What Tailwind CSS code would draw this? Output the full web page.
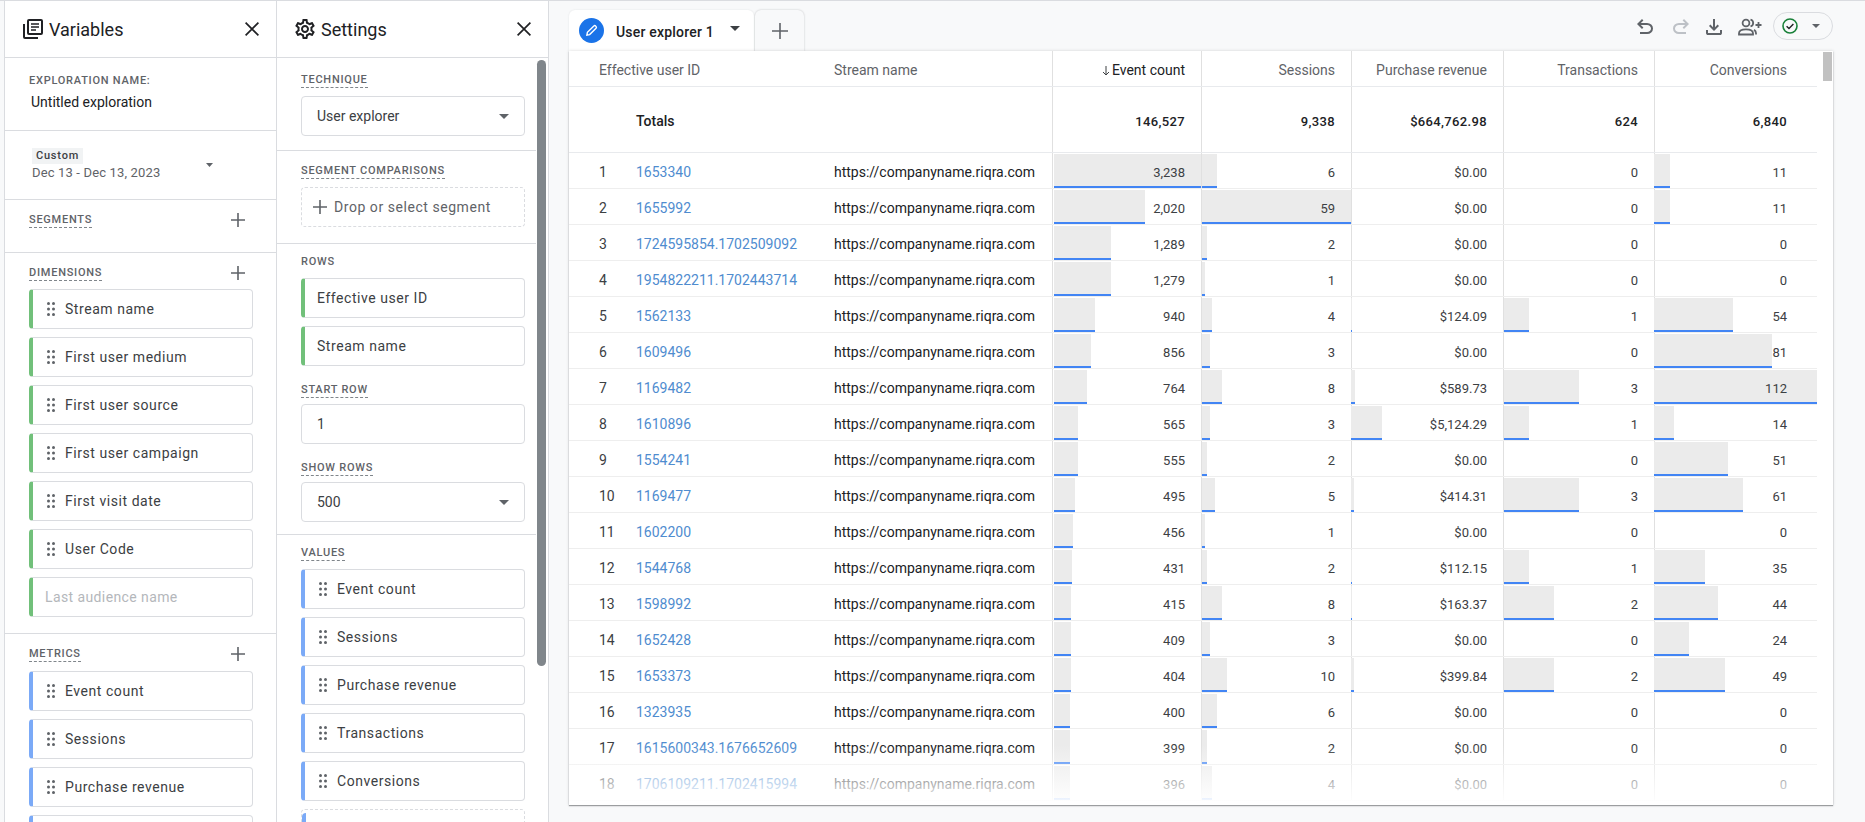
<!DOCTYPE html>
<html lang="en">

<head>
    <meta charset="UTF-8">
    <meta name="viewport" content="width=device-width, initial-scale=1.0">
    <title>User explorer</title>
    <script src="https://cdn.jsdelivr.net/npm/@tailwindcss/browser@4"></script>
</head>

<body class="flex h-[822px] w-[1865px] overflow-hidden border-t border-[#dadce0] bg-[#f8f9fa] pl-[4px] font-['Roboto',sans-serif] text-[#202124]">

    <!-- Variables panel -->
    <aside class="flex h-full w-[273px] shrink-0 flex-col overflow-hidden border-x border-[#dadce0] bg-white">
        <header class="flex h-[57px] shrink-0 items-center justify-between border-b border-[#dadce0] pl-[18px] pr-[17px]">
            <div class="flex items-center gap-[6px]">
                <svg class="h-[20px] w-[20px]" viewBox="0 0 20 20" fill="none" stroke="#202124" stroke-width="2">
                    <path d="M1 5v13a1 1 0 0 0 1 1h13"/>
                    <rect x="5" y="1" width="14" height="14" rx="1"/>
                    <path d="M8 5h8M8 8h8M8 11h5" stroke-width="1.6"/>
                </svg>
                <span class="text-[18px]">Variables</span>
            </div>
            <svg class="h-[14px] w-[14px]" viewBox="0 0 14 14" stroke="#202124" stroke-width="1.7"><path d="M.6.6l12.8 12.8M13.4.6L.6 13.4"/></svg>
        </header>

        <section class="h-[73px] shrink-0 border-b border-[#dadce0] pl-[24px] pt-[15px]">
            <div class="text-[11px] leading-[16px] font-medium tracking-[0.75px] text-[#5f6368]">EXPLORATION NAME:</div>
            <div class="ml-[2px] mt-[3px] text-[14px] leading-[20px]">Untitled exploration</div>
        </section>

        <section class="flex h-[69px] shrink-0 border-b border-[#dadce0] pl-[27px] pt-[17px]">
            <div class="w-[174px]">
                <span class="block w-[51px] bg-[#f1f3f4] text-center text-[11px] leading-[16px] font-medium tracking-[0.8px] text-[#3c4043]">Custom</span>
                <div class="mt-[1px] text-[13px] leading-[16px] tracking-[0.15px] text-[#5f6368]">Dec 13 - Dec 13, 2023</div>
            </div>
            <svg class="mt-[15px] h-[4px] w-[7px]" viewBox="0 0 7 4" fill="#5f6368"><path d="M0 0h7L3.5 4z"/></svg>
        </section>

        <section class="h-[53px] shrink-0 border-b border-[#dadce0] pl-[24px] pr-[31px] pt-[12px]">
            <div class="flex items-center justify-between">
                <span class="border-b border-dashed border-[#80868b] text-[11px] leading-[15px] font-medium tracking-[0.75px] text-[#5f6368]">SEGMENTS</span>
                <svg class="h-[14px] w-[14px]" viewBox="0 0 14 14" stroke="#5f6368" stroke-width="1.6"><path d="M7 0v14M0 7h14"/></svg>
            </div>
        </section>

        <section class="h-[381px] shrink-0 border-b border-[#dadce0] pl-[24px] pr-[23px] pt-[12px]">
            <div class="mb-[8px] flex items-center justify-between pr-[8px]">
                <span class="border-b border-dashed border-[#80868b] text-[11px] leading-[15px] font-medium tracking-[0.75px] text-[#5f6368]">DIMENSIONS</span>
                <svg class="h-[14px] w-[14px]" viewBox="0 0 14 14" stroke="#5f6368" stroke-width="1.6"><path d="M7 0v14M0 7h14"/></svg>
            </div>
            <div id="dimensions" class="flex flex-col gap-[8px]"></div>
        </section>

        <section class="pl-[24px] pr-[23px] pt-[12px]">
            <div class="mb-[9px] flex items-center justify-between pr-[8px]">
                <span class="border-b border-dashed border-[#80868b] text-[11px] leading-[15px] font-medium tracking-[0.75px] text-[#5f6368]">METRICS</span>
                <svg class="h-[14px] w-[14px]" viewBox="0 0 14 14" stroke="#5f6368" stroke-width="1.6"><path d="M7 0v14M0 7h14"/></svg>
            </div>
            <div id="metrics" class="flex flex-col gap-[8px]"></div>
        </section>
    </aside>

    <!-- Settings panel -->
    <aside class="flex h-full w-[272px] shrink-0 flex-col overflow-hidden border-r border-[#dadce0] bg-white">
        <header class="flex h-[57px] shrink-0 items-center justify-between border-b border-[#dadce0] pl-[16px] pr-[17px]">
            <div class="flex items-center gap-[4px]">
                <svg class="h-[24px] w-[24px]" viewBox="0 0 24 24" fill="#202124"><path d="M19.43 12.98c.04-.32.07-.64.07-.98 0-.34-.03-.66-.07-.98l2.11-1.65c.19-.15.24-.42.12-.64l-2-3.46c-.09-.16-.26-.25-.44-.25-.06 0-.12.01-.17.03l-2.49 1c-.52-.4-1.08-.73-1.69-.98l-.38-2.65C14.46 2.18 14.25 2 14 2h-4c-.25 0-.46.18-.49.42l-.38 2.65c-.61.25-1.17.59-1.69.98l-2.49-1c-.06-.02-.12-.03-.18-.03-.17 0-.34.09-.43.25l-2 3.46c-.13.22-.07.49.12.64l2.11 1.65c-.04.32-.07.65-.07.98 0 .33.03.66.07.98l-2.11 1.65c-.19.15-.24.42-.12.64l2 3.46c.09.16.26.25.44.25.06 0 .12-.01.17-.03l2.49-1c.52.4 1.08.73 1.69.98l.38 2.65c.03.24.24.42.49.42h4c.25 0 .46-.18.49-.42l.38-2.65c.61-.25 1.17-.59 1.69-.98l2.49 1c.06.02.12.03.18.03.17 0 .34-.09.43-.25l2-3.46c.12-.22.07-.49-.12-.64l-2.11-1.65zm-1.98-1.71c.04.31.05.52.05.73 0 .21-.02.43-.05.73l-.14 1.13.89.7 1.08.84-.7 1.21-1.27-.51-1.04-.42-.9.68c-.43.32-.84.56-1.25.73l-1.06.43-.16 1.13-.2 1.35h-1.4l-.19-1.35-.16-1.13-1.06-.43c-.43-.18-.83-.41-1.23-.71l-.91-.7-1.06.43-1.27.51-.7-1.21 1.08-.84.89-.7-.14-1.13c-.03-.31-.05-.54-.05-.74s.02-.43.05-.73l.14-1.13-.89-.7-1.08-.84.7-1.21 1.27.51 1.04.42.9-.68c.43-.32.84-.56 1.25-.73l1.06-.43.16-1.13.2-1.35h1.39l.19 1.35.16 1.13 1.06.43c.43.18.83.41 1.23.71l.91.7 1.06-.43 1.27-.51.7 1.21-1.07.85-.89.7.14 1.13zM12 8c-2.21 0-4 1.79-4 4s1.79 4 4 4 4-1.79 4-4-1.79-4-4-4zm0 6c-1.1 0-2-.9-2-2s.9-2 2-2 2 .9 2 2-.9 2-2 2z"/></svg>
                <span class="text-[18px]">Settings</span>
            </div>
            <svg class="h-[14px] w-[14px]" viewBox="0 0 14 14" stroke="#202124" stroke-width="1.7"><path d="M.6.6l12.8 12.8M13.4.6L.6 13.4"/></svg>
        </header>

        <div class="flex min-h-0 flex-1">
            <div class="w-[259px] shrink-0">
                <section class="h-[93px] border-b border-[#dadce0] pl-[24px] pr-[11px] pt-[14px]">
                    <span class="block w-fit border-b border-dashed border-[#80868b] text-[11px] leading-[15px] font-medium tracking-[0.75px] text-[#5f6368]">TECHNIQUE</span>
                    <div class="mt-[8px] flex h-[40px] items-center justify-between rounded-[4px] border border-[#dadce0] pl-[15px] pr-[15px] text-[14px]">
                        <span class="text-[#3c4043]">User explorer</span>
                        <svg class="h-[5px] w-[10px]" viewBox="0 0 10 5" fill="#5f6368"><path d="M0 0h10L5 5z"/></svg>
                    </div>
                </section>

                <section class="h-[93px] border-b border-[#dadce0] pl-[24px] pr-[11px] pt-[12px]">
                    <span class="block w-fit border-b border-dashed border-[#80868b] text-[11px] leading-[15px] font-medium tracking-[0.75px] text-[#5f6368]">SEGMENT COMPARISONS</span>
                    <div class="mt-[8px] flex h-[40px] items-center gap-[7px] rounded-[4px] border border-dashed border-[#dadce0] pl-[11px] text-[14px] tracking-[0.55px] text-[#5f6368]">
                        <svg class="h-[14px] w-[14px]" viewBox="0 0 14 14" stroke="#5f6368" stroke-width="1.6"><path d="M7 0v14M0 7h14"/></svg>
                        <span>Drop or select segment</span>
                    </div>
                </section>

                <section class="h-[291px] border-b border-[#dadce0] pl-[24px] pr-[11px] pt-[10px]">
                    <span class="block w-fit text-[11px] leading-[16px] font-medium tracking-[0.75px] text-[#5f6368]">ROWS</span>
                    <div id="rows" class="mt-[8px] flex flex-col gap-[8px]"></div>
                    <span class="mt-[16px] block w-fit border-b border-dashed border-[#80868b] text-[11px] leading-[15px] font-medium tracking-[0.75px] text-[#5f6368]">START ROW</span>
                    <div class="mt-[6px] flex h-[40px] items-center rounded-[4px] border border-[#dadce0] pl-[15px] text-[14px] text-[#3c4043]">1</div>
                    <span class="mt-[16px] block w-fit border-b border-dashed border-[#80868b] text-[11px] leading-[15px] font-medium tracking-[0.75px] text-[#5f6368]">SHOW ROWS</span>
                    <div class="mt-[6px] flex h-[40px] items-center justify-between rounded-[4px] border border-[#dadce0] px-[15px] text-[14px] text-[#3c4043]">
                        <span>500</span>
                        <svg class="h-[5px] w-[10px]" viewBox="0 0 10 5" fill="#5f6368"><path d="M0 0h10L5 5z"/></svg>
                    </div>
                </section>

                <section class="pl-[24px] pr-[11px] pt-[10px]">
                    <span class="block w-fit border-b border-dashed border-[#80868b] text-[11px] leading-[15px] font-medium tracking-[0.75px] text-[#5f6368]">VALUES</span>
                    <div id="values" class="mt-[8px] flex flex-col gap-[8px]"></div>
                    <div class="mt-[8px] h-[40px] rounded-[4px] border border-dashed border-[#dadce0] pt-[3px]">
                        <div class="h-[30px] w-[4px] rounded-l-[4px] bg-[#7baaf7]"></div>
                    </div>
                </section>
            </div>
            <div class="ml-[1px] mt-[2px] h-[606px] w-[9px] rounded-full bg-[#80868b]"></div>
        </div>
    </aside>

    <!-- Report area -->
    <main class="flex min-w-0 flex-1 flex-col pl-[20px] pr-[32px]">
        <div class="flex h-[50px] shrink-0 justify-between">
            <div class="flex items-end gap-[1px]">
                <div class="flex h-[41px] w-[185px] items-center rounded-t-[6px] bg-white pl-[10px] shadow-[0_0_2px_rgba(60,64,67,.12)]">
                    <span class="flex h-[25px] w-[25px] items-center justify-center rounded-full bg-[#1a73e8]">
                        <svg class="h-[13px] w-[13px]" viewBox="0 0 14 14" fill="none" stroke="#fff" stroke-width="1.5"><path d="M2 12l.6-3L9.5 2.1a1.3 1.3 0 0 1 1.9 0l.5.5a1.3 1.3 0 0 1 0 1.9L5 11.4z"/></svg>
                    </span>
                    <span class="ml-[12px] pt-[4px] text-[14px] font-medium tracking-[0.2px]">User explorer 1</span>
                    <svg class="ml-[16px] mb-[4px] h-[5px] w-[10px]" viewBox="0 0 10 5" fill="#3c4043"><path d="M0 0h10L5 5z"/></svg>
                </div>
                <div class="flex h-[41px] w-[49px] items-center justify-center rounded-t-[6px] bg-[#f8f9fa] shadow-[0_0_2px_rgba(60,64,67,.3)]">
                    <svg class="h-[16px] w-[16px]" viewBox="0 0 16 16" stroke="#5f6368" stroke-width="1.6"><path d="M8 0v16M0 8h16"/></svg>
                </div>
            </div>

            <div class="flex items-start">
                <svg class="mt-[14px] h-[24px] w-[24px]" viewBox="0 0 24 24" fill="#5f6368"><path d="M7 19v-2h7.1q1.575 0 2.738-1T18 13.5Q18 12 16.838 11T14.1 10H7.8l2.6 2.6L9 14 4 9l5-5 1.4 1.4L7.8 8h6.3q2.425 0 4.163 1.575T20 13.5q0 2.35-1.738 3.925T14.1 19H7Z"/></svg>
                <svg class="ml-[12px] mt-[14px] h-[24px] w-[24px]" viewBox="0 0 24 24" fill="#bdc1c6"><path d="M9.9 19q-2.425 0-4.163-1.575T4 13.5q0-2.35 1.738-3.925T9.9 8h6.3l-2.6-2.6L15 4l5 5-5 5-1.4-1.4 2.6-2.6H9.9q-1.575 0-2.738 1T6 13.5Q6 15 7.163 16T9.9 17H17v2H9.9Z"/></svg>
                <svg class="ml-[9px] mt-[14px] h-[24px] w-[24px]" viewBox="0 0 24 24" fill="#5f6368"><path d="M12 16l-5-5 1.4-1.45 2.6 2.6V4h2v8.15l2.6-2.6L17 11l-5 5Zm-6 4q-.825 0-1.413-.587T4 18v-3h2v3h12v-3h2v3q0 .825-.587 1.413T18 20H6Z"/></svg>
                <svg class="ml-[12px] mt-[17px] h-[18px] w-[24px]" viewBox="0 0 24 18" fill="none" stroke="#5f6368" stroke-width="1.8">
                    <circle cx="8" cy="5" r="3.4"/>
                    <path d="M1 16.5v-1.2c0-2.6 3.4-3.9 7-3.9s7 1.3 7 3.9v1.2z"/>
                    <path d="M12.5 1.6a3.5 3.5 0 0 1 0 6.8M16 11.8c1.3.8 2 2 2 3.4v1.3"/>
                    <path d="M20.5 4v6M17.5 7h6"/>
                </svg>
                <div class="ml-[11px] mt-[11px] flex h-[28px] w-[60px] items-center rounded-full border border-[#dadce0] pl-[8px]">
                    <svg class="h-[16px] w-[16px]" viewBox="0 0 16 16" fill="none"><circle cx="8" cy="8" r="7" stroke="#188038" stroke-width="1.6"/><path d="M4.6 8.2l2.4 2.4 4.4-4.6" stroke="#202124" stroke-width="1.4"/></svg>
                    <svg class="ml-[14px] h-[4px] w-[8px]" viewBox="0 0 8 4" fill="#5f6368"><path d="M0 0h8L4 4z"/></svg>
                </div>
            </div>
        </div>

        <div class="relative h-[754px] w-[1264px] shrink-0 overflow-hidden bg-white shadow-[0_1px_1px_rgba(60,64,67,.45),0_0_3px_rgba(60,64,67,.2)]">
            <div class="w-[1248px]">
                <div class="grid h-[36px] grid-cols-[67px_198px_218px_149px_150px_152px_151px_163px] grid-rows-[35px] border-b border-[#e8eaed] text-[14px] leading-[39px] text-[#5f6368]">
                    <div class="col-span-2 pl-[30px]">Effective user ID</div>
                    <div>Stream name</div>
                    <div class="flex items-start justify-end gap-[2px] border-l border-[#e0e0e0] pr-[16px] text-[#202124]">
                        <svg class="mt-[15px] h-[10px] w-[8px]" viewBox="0 0 8 10" fill="none" stroke="#3c4043" stroke-width="1"><path d="M4 0v9M1 6l3 3 3-3"/></svg>
                        <span>Event count</span>
                    </div>
                    <div class="border-l border-[#e0e0e0] pr-[16px] text-right">Sessions</div>
                    <div class="border-l border-[#e0e0e0] pr-[16px] text-right">Purchase revenue</div>
                    <div class="border-l border-[#e0e0e0] pr-[16px] text-right">Transactions</div>
                    <div class="border-l border-[#e0e0e0] pr-[30px] text-right">Conversions</div>
                </div>
                <div class="grid h-[66px] grid-cols-[67px_198px_218px_149px_150px_152px_151px_163px] grid-rows-[65px] border-b border-[#e8eaed] text-[13px] font-medium leading-[69px] tracking-[0.35px]">
                    <div></div>
                    <div class="text-[14px] tracking-normal">Totals</div>
                    <div></div>
                    <div class="border-l border-[#e0e0e0] pr-[16px] text-right">146,527</div>
                    <div class="border-l border-[#e0e0e0] pr-[16px] text-right">9,338</div>
                    <div class="border-l border-[#e0e0e0] pr-[16px] text-right">$664,762.98</div>
                    <div class="border-l border-[#e0e0e0] pr-[16px] text-right">624</div>
                    <div class="border-l border-[#e0e0e0] pr-[30px] text-right">6,840</div>
                </div>
                <div id="table-rows"></div>
            </div>
            <div class="absolute right-[1px] top-[1px] h-[29px] w-[9px] bg-[#c1c1c1]"></div>
            <div class="absolute inset-x-0 bottom-0 h-[60px] bg-gradient-to-b from-white/0 to-white"></div>
        </div>
    </main>

    <script>
        const dragIcon = `<svg class="h-[14px] w-[8px] shrink-0" viewBox="0 0 8 14" fill="#5f6368"><circle cx="1.5" cy="1.5" r="1.5"/><circle cx="6.5" cy="1.5" r="1.5"/><circle cx="1.5" cy="7" r="1.5"/><circle cx="6.5" cy="7" r="1.5"/><circle cx="1.5" cy="12.5" r="1.5"/><circle cx="6.5" cy="12.5" r="1.5"/></svg>`;

        function greenChip(name) {
            return `<div class="flex h-[40px] shrink-0 items-center gap-[10px] rounded-[4px] border border-l-[4px] border-[#dadce0] border-l-[#71c07a] pl-[14px] text-[14px] tracking-[0.55px] text-[#3c4043]">${dragIcon}<span>${name}</span></div>`;
        }

        function blueChip(name) {
            return `<div class="flex h-[40px] shrink-0 items-center gap-[10px] rounded-[4px] border border-l-[4px] border-[#dadce0] border-l-[#7baaf7] pl-[14px] text-[14px] tracking-[0.55px] text-[#3c4043]">${dragIcon}<span>${name}</span></div>`;
        }

        document.getElementById('dimensions').innerHTML =
            ['Stream name', 'First user medium', 'First user source', 'First user campaign', 'First visit date', 'User Code'].map(greenChip).join('') +
            `<div class="flex h-[40px] items-center rounded-[4px] border border-l-[4px] border-[#dadce0] border-l-[#71c07a] pl-[12px] text-[14px] tracking-[0.4px] text-[#b4b7bb]">Last audience name</div>`;

        document.getElementById('metrics').innerHTML =
            ['Event count', 'Sessions', 'Purchase revenue', ''].map(blueChip).join('');

        document.getElementById('values').innerHTML =
            ['Event count', 'Sessions', 'Purchase revenue', 'Transactions', 'Conversions'].map(blueChip).join('');

        document.getElementById('rows').innerHTML = ['Effective user ID', 'Stream name'].map(name =>
            `<div class="flex h-[40px] items-center rounded-[4px] border border-l-[4px] border-[#dadce0] border-l-[#71c07a] pl-[12px] text-[14px] tracking-[0.55px] text-[#3c4043]">${name}</div>`
        ).join('');

        // id, then [label, bar width in px] for each metric column
        const tableRows = [
            ['1653340', ['3,238', 163], ['6', 15], ['$0.00', 0], ['0', 0], ['11', 16]],
            ['1655992', ['2,020', 91], ['59', 149], ['$0.00', 0], ['0', 0], ['11', 16]],
            ['1724595854.1702509092', ['1,289', 57], ['2', 5], ['$0.00', 0], ['0', 0], ['0', 0]],
            ['1954822211.1702443714', ['1,279', 57], ['1', 3], ['$0.00', 0], ['0', 0], ['0', 0]],
            ['1562133', ['940', 41], ['4', 10], ['$124.09', 1], ['1', 25], ['54', 79]],
            ['1609496', ['856', 37], ['3', 8], ['$0.00', 0], ['0', 0], ['81', 118]],
            ['1169482', ['764', 33], ['8', 20], ['$589.73', 4], ['3', 75], ['112', 163]],
            ['1610896', ['565', 24], ['3', 8], ['$5,124.29', 31], ['1', 25], ['14', 20]],
            ['1554241', ['555', 24], ['2', 5], ['$0.00', 0], ['0', 0], ['51', 74]],
            ['1169477', ['495', 21], ['5', 13], ['$414.31', 3], ['3', 75], ['61', 89]],
            ['1602200', ['456', 19], ['1', 3], ['$0.00', 0], ['0', 0], ['0', 0]],
            ['1544768', ['431', 18], ['2', 5], ['$112.15', 1], ['1', 25], ['35', 51]],
            ['1598992', ['415', 17], ['8', 20], ['$163.37', 1], ['2', 50], ['44', 64]],
            ['1652428', ['409', 17], ['3', 8], ['$0.00', 0], ['0', 0], ['24', 35]],
            ['1653373', ['404', 17], ['10', 25], ['$399.84', 3], ['2', 50], ['49', 71]],
            ['1323935', ['400', 16], ['6', 15], ['$0.00', 0], ['0', 0], ['0', 0]],
            ['1615600343.1676652609', ['399', 16], ['2', 5], ['$0.00', 0], ['0', 0], ['0', 0]],
            ['1706109211.1702415994', ['396', 16], ['4', 10], ['$0.00', 0], ['0', 0], ['0', 0]],
        ];

        function metricCell(cell, barLeft, pad) {
            const bar = cell[1] > 0
                ? `<div class="absolute ${barLeft} top-[1px] h-[34px] border-b-2 border-[#4285f4] bg-[#ebebeb]" style="width:${cell[1]}px"></div>`
                : '';
            return `<div class="relative border-l border-[#e0e0e0] text-right ${pad}">${bar}<span class="relative text-[13px] text-[#3c4043]">${cell[0]}</span></div>`;
        }

        document.getElementById('table-rows').innerHTML = tableRows.map((row, i) => `
            <div class="grid h-[36px] grid-cols-[67px_198px_218px_149px_150px_152px_151px_163px] grid-rows-[35px] border-b border-[#eeeeee] text-[14px] leading-[39px]">
                <div class="pl-[30px] text-[#3c4043]">${i + 1}</div>
                <div class="text-[#4f8ccf]">${row[0]}</div>
                <div class="text-[#202124]">https://companyname.riqra.com</div>
                ${metricCell(row[1], 'left-[1px]', 'pr-[16px]')}
                ${metricCell(row[2], 'left-0', 'pr-[16px]')}
                ${metricCell(row[3], 'left-[-1px]', 'pr-[16px]')}
                ${metricCell(row[4], 'left-0', 'pr-[16px]')}
                ${metricCell(row[5], 'left-[-1px]', 'pr-[30px]')}
            </div>`).join('');
    </script>
</body>

</html>
